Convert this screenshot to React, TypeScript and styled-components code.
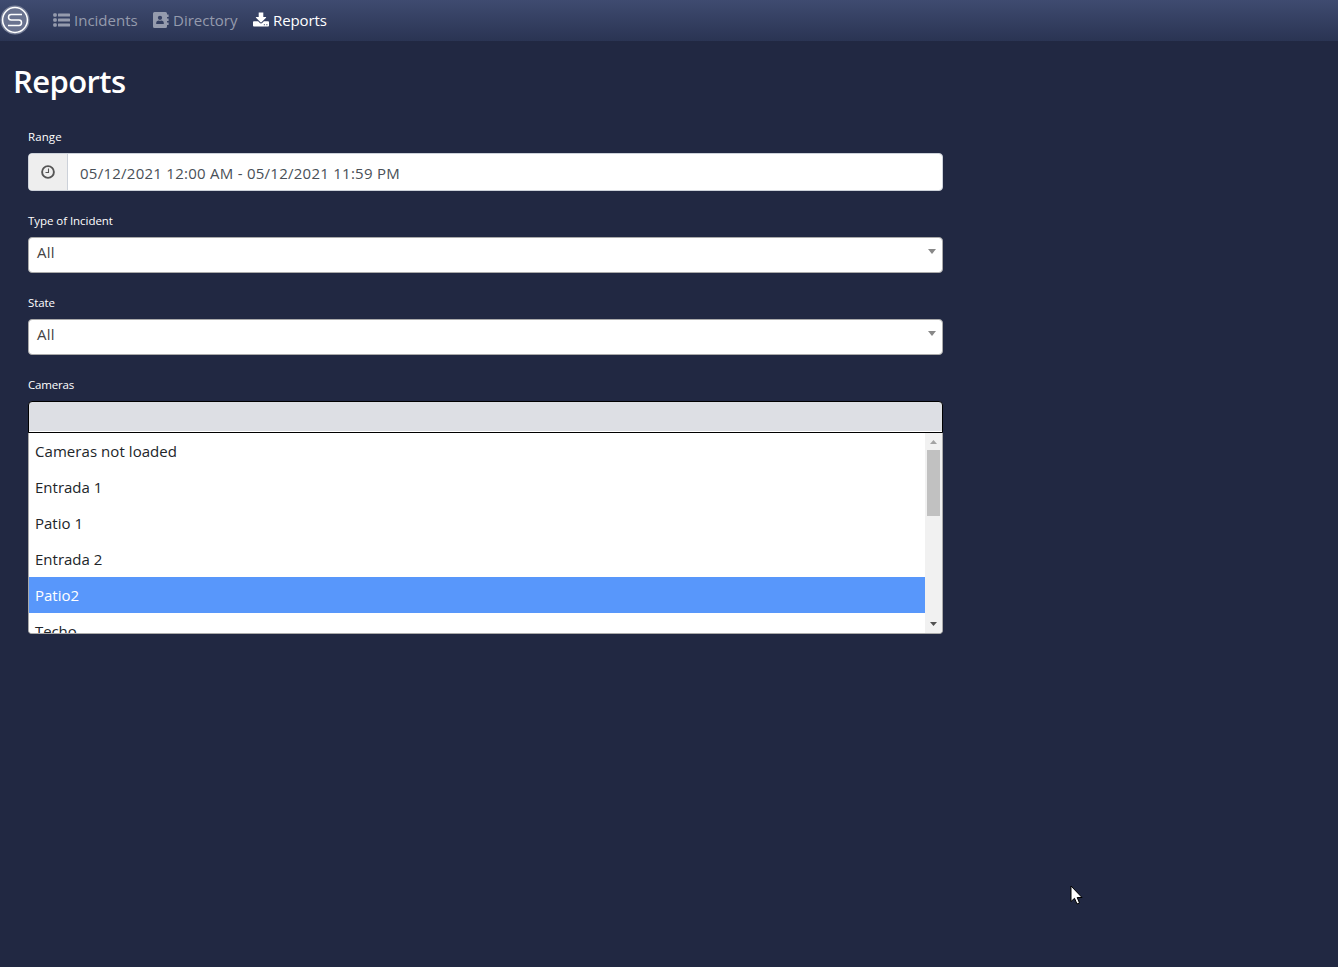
import React from "react";
import styled, { createGlobalStyle } from "styled-components";

const GlobalStyle = createGlobalStyle`
  * { box-sizing: border-box; }
  body {
    margin: 0;
    background: #212842;
    color: #fff;
    font-family: "Open Sans", "Noto Sans", sans-serif;
    font-size: 15px;
  }
`;

const Page = styled.div`
  min-height: 967px;
  overflow: hidden;
`;

const Navbar = styled.nav`
  height: 41px;
  display: flex;
  align-items: center;
  background: linear-gradient(#3f4b70, #2a3453);
`;

const Brand = styled.a`
  width: 30px;
  height: 30px;
  margin: 0 23px 1px 0;
  svg { display: block; }
`;

const NavItem = styled.a<{ $active?: boolean }>`
  display: flex;
  align-items: center;
  width: 100px;
  height: 40px;
  padding-bottom: 1px;
  color: ${(p) => (p.$active ? "#fff" : "#959bad")};
  white-space: nowrap;
  svg { flex: none; }
`;

const NavText = styled.span<{ $spacing?: number }>`
  margin-left: 4px;
  line-height: 20px;
  letter-spacing: ${(p) => p.$spacing ?? 0}px;
`;

const Title = styled.h1`
  margin: 19px 0 0 13px;
  font-size: 31px;
  line-height: 42px;
  font-weight: 600;
  letter-spacing: -0.6px;
`;

const Form = styled.form`
  width: 915px;
  margin: 25px 0 0 28px;
`;

const Field = styled.div<{ $height: number }>`
  height: ${(p) => p.$height}px;
`;

const Label = styled.label<{ $spacing?: number }>`
  display: block;
  height: 26px;
  font-size: 11.5px;
  line-height: 20px;
  letter-spacing: ${(p) => p.$spacing ?? 0}px;
`;

const InputGroup = styled.div`
  display: flex;
  height: 38px;
  border: 1px solid #ccd1d9;
  border-radius: 4px;
  background: #fff;
  overflow: hidden;
`;

const Addon = styled.span`
  width: 39px;
  display: flex;
  align-items: center;
  justify-content: center;
  background: #eee;
  border-right: 1px solid #ccd1d9;
`;

const RangeValue = styled.span`
  padding: 1px 12px 0;
  color: #495057;
  line-height: 36px;
  letter-spacing: 0.257px;
`;

const Select = styled.div`
  display: flex;
  justify-content: space-between;
  height: 36px;
  padding: 0 6px 0 8px;
  border: 1px solid #aaa;
  border-radius: 4px;
  background: #fff;
  color: #444;
  line-height: 28px;
  letter-spacing: 0.3px;
`;

const Arrow = styled.i`
  margin-top: 11px;
  width: 0;
  height: 0;
  border: 4px solid transparent;
  border-top: 5px solid #888;
  border-bottom: 0;
`;

const SearchBox = styled.div`
  height: 32px;
  border: 1px solid #000;
  border-radius: 4px 4px 0 0;
  background: #dddfe4;
  box-shadow: inset 0 -1px #fff;
`;

const Dropdown = styled.div`
  display: flex;
  height: 201px;
  border: 1px solid #aaa;
  border-top: 0;
  border-radius: 0 0 4px 4px;
  background: #fff;
  overflow: hidden;
`;

const Options = styled.div`
  flex: 1;
`;

const Option = styled.div<{ $selected?: boolean; $spacing?: number }>`
  height: 36px;
  padding: 0 6px;
  line-height: 36px;
  color: ${(p) => (p.$selected ? "#fff" : "#212529")};
  background: ${(p) => (p.$selected ? "#5897fb" : "#fff")};
  letter-spacing: ${(p) => p.$spacing ?? 0}px;
`;

const Scrollbar = styled.div`
  width: 17px;
  display: flex;
  flex-direction: column;
  align-items: center;
  justify-content: space-between;
  background: #f1f1f1;
`;

const ScrollThumb = styled.div`
  width: 13px;
  height: 66px;
  margin-bottom: auto;
  background: #c1c1c1;
`;

const ScrollButton = styled.div`
  height: 17px;
  display: flex;
  svg { display: block; }
`;

const Cursor = styled.svg`
  position: absolute;
  left: 1070px;
  top: 884px;
`;

const Logo = () => (
  <svg width="30" height="30" viewBox="0 0 30 30" fill="none">
    <circle cx="15" cy="15" r="14.5" fill="#7a829b" />
    <circle cx="15" cy="15" r="12.4" fill="#69728f" stroke="#fff" strokeWidth="1.5" />
    <path
      d="M22 9.5H11.2Q8.5 9.5 8.5 12.2T11.2 15H19Q21.5 15 21.5 17.7T19 20.5H8"
      stroke="#fff"
      strokeWidth="1.5"
    />
  </svg>
);

const ListIcon = () => (
  <svg width="17" height="14" viewBox="0 0 17 14" fill="currentColor">
    {[0.3, 5.3, 10.3].map((y) => (
      <React.Fragment key={y}>
        <rect x="0.2" y={y} width="3.6" height="3.4" rx="1.2" />
        <rect x="5" y={y + 0.2} width="12" height="3" rx="0.5" />
      </React.Fragment>
    ))}
  </svg>
);

const DirectoryIcon = () => (
  <svg width="16" height="16" viewBox="0 0 16 16" fill="currentColor">
    <path
      fillRule="evenodd"
      d="M1.500 0H12.500Q14 0 14 1.500V14.500Q14 16 12.500 16H1.500Q0 16 0 14.500V1.500Q0 0 1.500 0ZM7 3.700A2.150 2.150 0 1 0 7 8A2.150 2.150 0 1 0 7 3.700ZM3.200 11.900H10.800V10.700Q10.800 8.500 8.600 8.400Q7 9.100 5.400 8.400Q3.200 8.500 3.200 10.700Z"
    />
    <path d="M14 2.500H15.600V5H14ZM14 6.500H15.600V9H14ZM14 10.500H15.600V13H14Z" />
  </svg>
);

const DownloadIcon = () => (
  <svg width="16" height="16" viewBox="0 0 16 16" fill="currentColor">
    <path d="M5.700 0.500H10.300V5H12.900Q13.500 5.200 13 5.800L8.500 10.200Q8 10.600 7.500 10.200L3 5.800Q2.500 5.200 3.100 5H5.700Z" />
    <path
      fillRule="evenodd"
      d="M0.900 9.300H5.100L6.600 10.800Q8 12 9.400 10.800L10.900 9.300H15.100Q16 9.300 16 10.200V13.600Q16 14.500 15.100 14.500H0.900Q0 14.500 0 13.600V10.200Q0 9.300 0.900 9.300ZM10.800 12.200V13.200H11.900V12.200ZM13.300 12.200V13.200H14.400V12.200Z"
    />
  </svg>
);

const Clock = () => (
  <svg width="14" height="14" viewBox="0 0 14 14" fill="none" stroke="#555">
    <circle cx="7" cy="7" r="5.9" strokeWidth="1.9" />
    <path d="M7.5 3.5V7.5H4.5" strokeWidth="1.1" />
  </svg>
);

export default function App() {
  return (
    <Page>
      <GlobalStyle />
      <Navbar>
        <Brand><Logo /></Brand>
        <NavItem>
          <ListIcon />
          <NavText>Incidents</NavText>
        </NavItem>
        <NavItem>
          <DirectoryIcon />
          <NavText>Directory</NavText>
        </NavItem>
        <NavItem $active>
          <DownloadIcon />
          <NavText $spacing={-0.1}>Reports</NavText>
        </NavItem>
      </Navbar>
      <Title>Reports</Title>
      <Form>
        <Field $height={84}>
          <Label $spacing={0.1}>Range</Label>
          <InputGroup>
            <Addon><Clock /></Addon>
            <RangeValue>05/12/2021 12:00 AM - 05/12/2021 11:59 PM</RangeValue>
          </InputGroup>
        </Field>
        <Field $height={82}>
          <Label $spacing={-0.05}>Type of Incident</Label>
          <Select>All<Arrow /></Select>
        </Field>
        <Field $height={82}>
          <Label $spacing={-0.1}>State</Label>
          <Select>All<Arrow /></Select>
        </Field>
        <Field $height={260}>
          <Label $spacing={-0.2}>Cameras</Label>
          <SearchBox />
          <Dropdown>
            <Options>
              <Option $spacing={0.06}>Cameras not loaded</Option>
              <Option>Entrada 1</Option>
              <Option>Patio 1</Option>
              <Option>Entrada 2</Option>
              <Option $selected>Patio2</Option>
              <Option $spacing={-0.1}>Techo</Option>
            </Options>
            <Scrollbar>
              <ScrollButton>
                <svg width="17" height="17"><path d="M5 11h7L8.500 7z" fill="#a3a3a3" /></svg>
              </ScrollButton>
              <ScrollThumb />
              <ScrollButton>
                <svg width="17" height="17"><path d="M5 6h7L8.500 10z" fill="#505050" /></svg>
              </ScrollButton>
            </Scrollbar>
          </Dropdown>
        </Field>
      </Form>
      <Cursor width="14" height="22" viewBox="0 0 14 22">
        <path d="M1 2V17.500L4.500 14.300L7 20L9.500 19L7.200 13.500H12z" fill="#fff" stroke="#000" />
      </Cursor>
    </Page>
  );
}
